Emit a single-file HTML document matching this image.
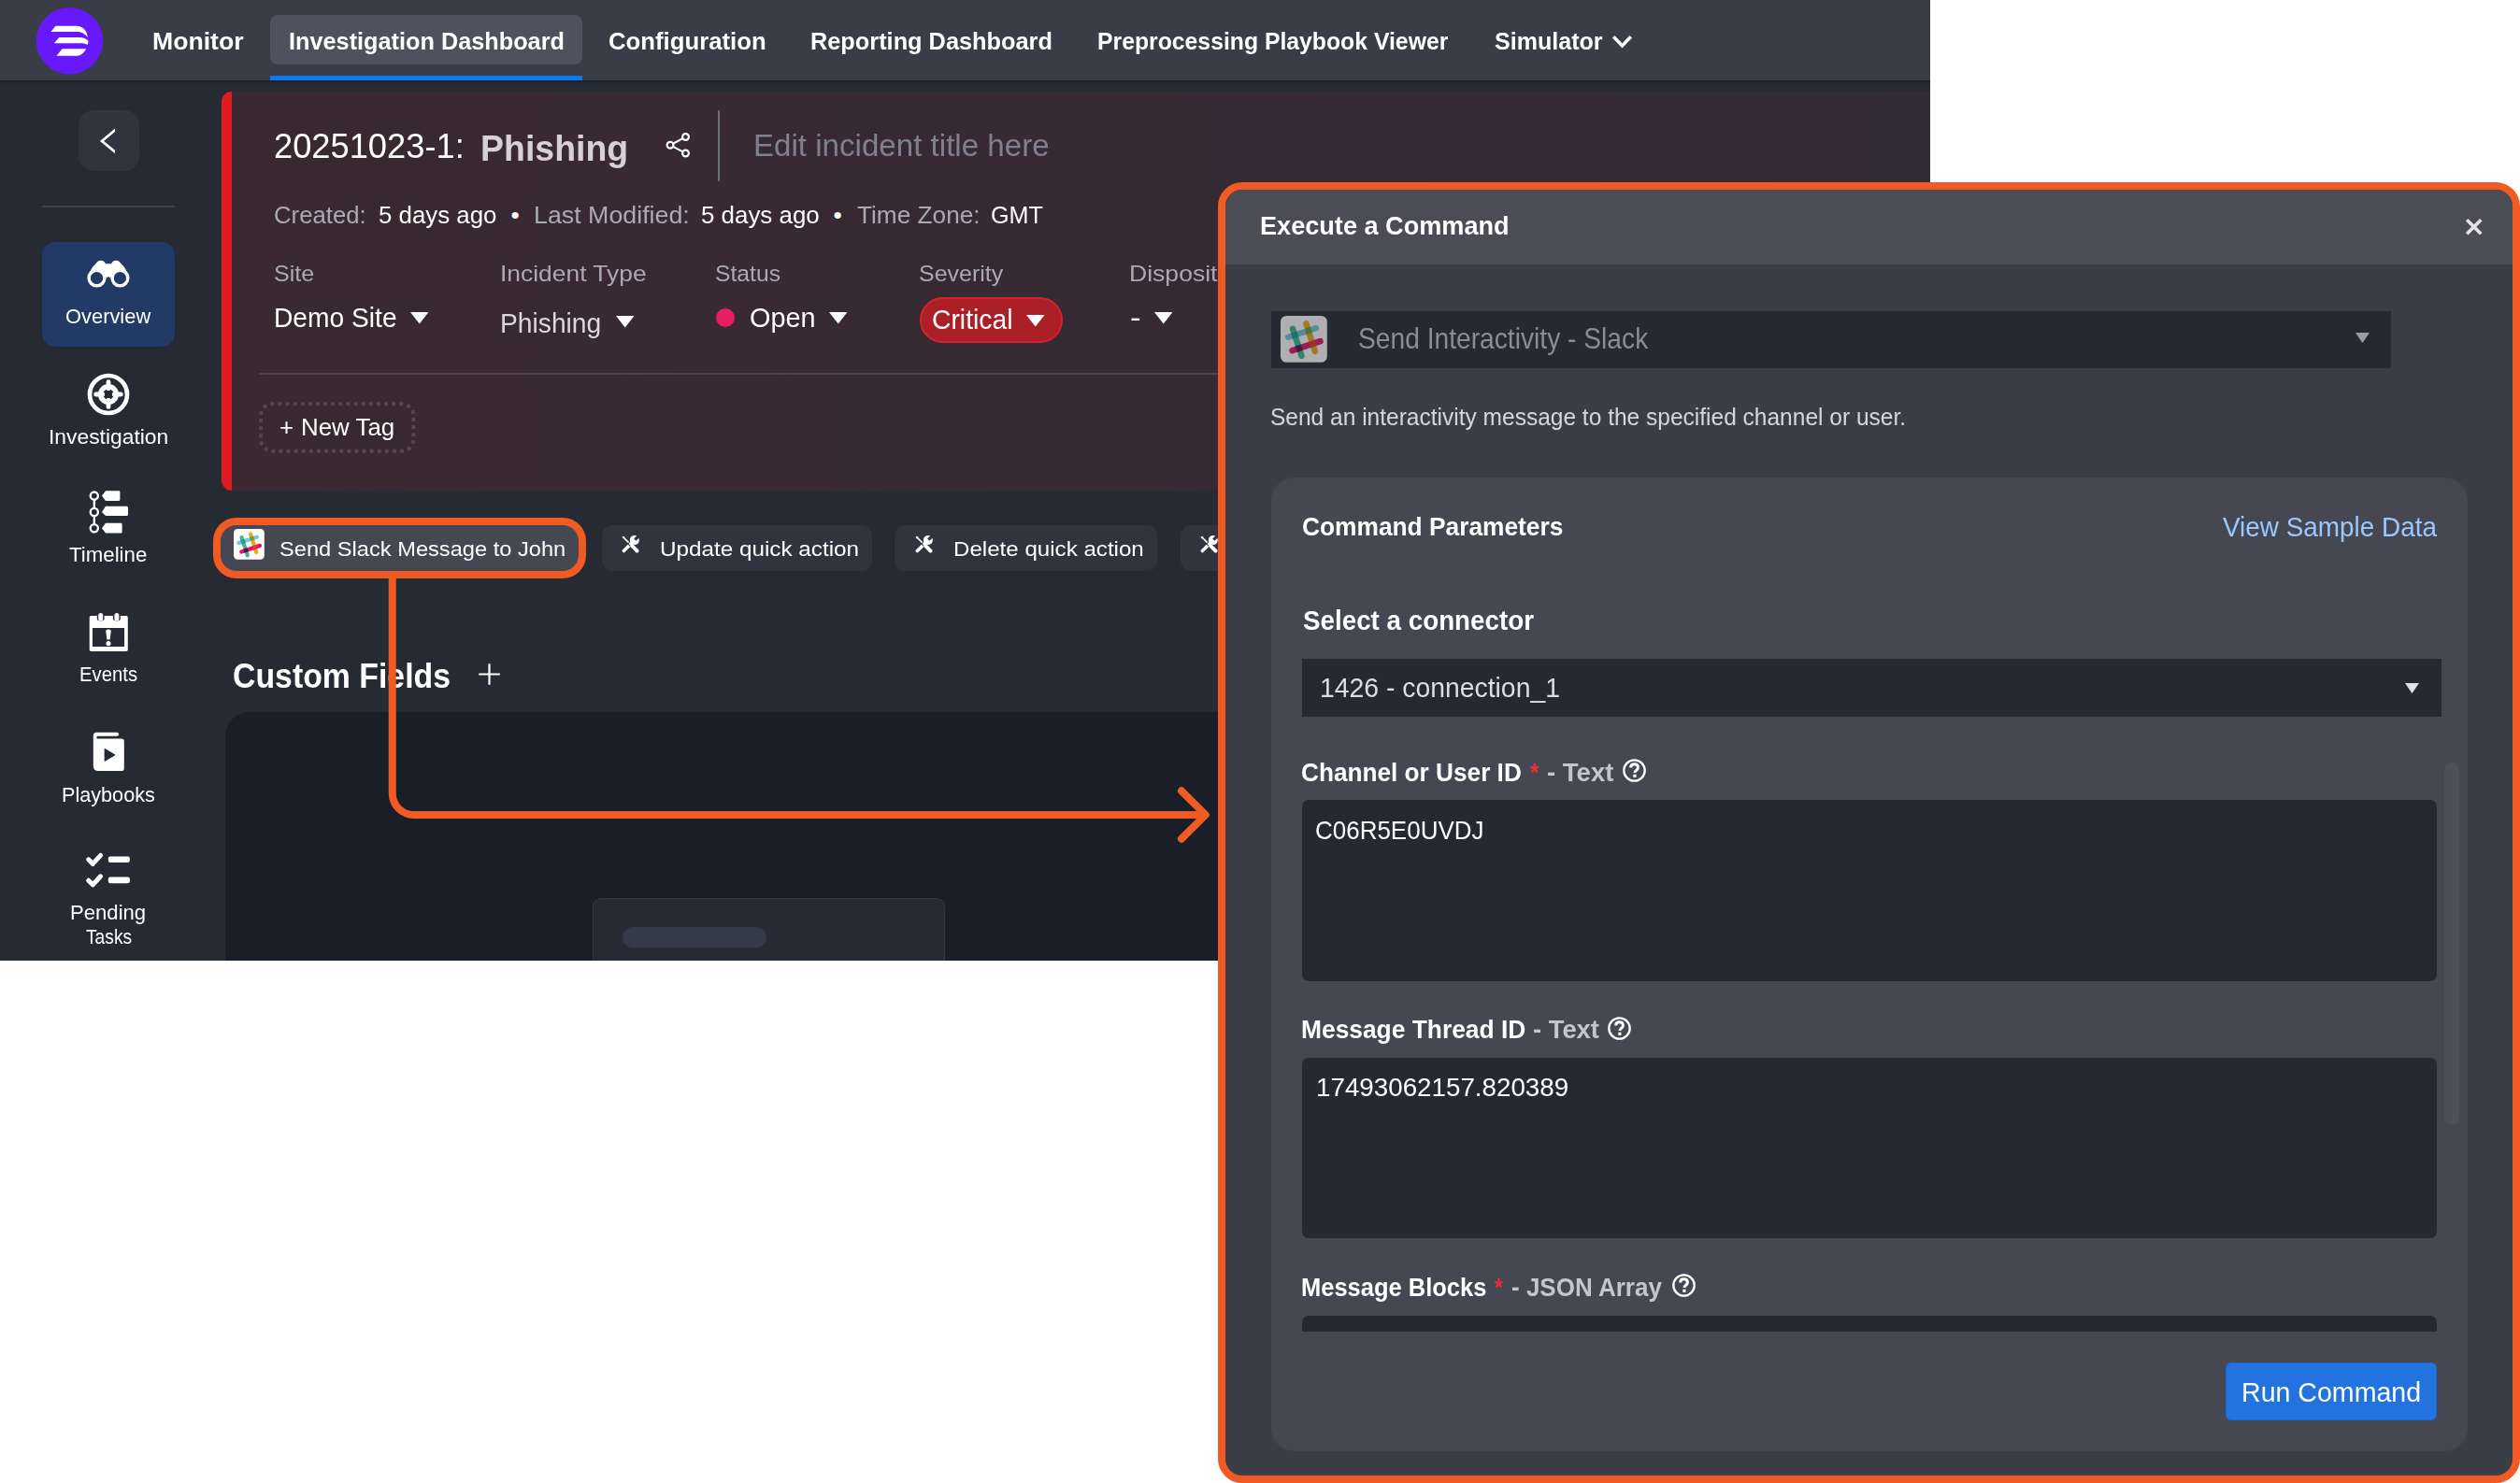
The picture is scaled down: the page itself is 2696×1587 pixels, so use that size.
<!DOCTYPE html>
<html lang="en"><head><meta charset="utf-8"><title>Execute a Command - Investigation Dashboard</title>
<style>
html,body{margin:0;padding:0}
body{width:2696px;height:1587px;position:relative;overflow:hidden;background:#fff;font-family:"Liberation Sans", Arial, sans-serif;}
div,span,svg{position:absolute;box-sizing:border-box}
span{white-space:nowrap;line-height:normal;transform-origin:0 0;display:block}
</style></head>
<body>
<div id="shot" style="left:0;top:0;width:2065px;height:1027.5px;background:#262a33;overflow:hidden">
<header><nav aria-label="Main">
<div style="left:0px;top:0px;width:2065px;height:85.5px;background:#393d47;box-shadow:0 1px 3px rgba(0,0,0,.35)"></div>
<svg style="left:38px;top:7px;" width="74" height="74" viewBox="0 0 74 74"><circle cx="36.4" cy="36.7" r="35.7" fill="#6818fd"/>
<path fill="#fff" d="M21.5 20.8 H44 C50.5 20.8 55.2 26 55.9 33.2 C52.5 28.6 48.5 27 44 27 H16.4 Z"/>
<path fill="#fff" d="M25.3 33 H47 C52 33 55.6 35.2 56.6 37.6 L55.8 41 C53.8 39.8 51.5 39.3 48.5 39.3 H19.9 Z"/>
<path fill="#fff" d="M28.5 45.2 H54.2 C52 49.5 48.3 52.8 43.5 52.8 H22.5 Z"/></svg>
<div style="left:289px;top:16px;width:334px;height:52.5px;background:#4d525e;border-radius:8px"></div>
<div style="left:289px;top:81.3px;width:334px;height:4.4px;background:#0d78f2"></div>
<span id="t0" style="left:162.69px;top:30.00px;font-size:25.2px;font-weight:700;color:#fff;transform:scaleX(1.0571);">Monitor</span>
<span id="t1" style="left:309.00px;top:30.00px;font-size:25.2px;font-weight:700;color:#fff;transform:scaleX(1.0034);">Investigation Dashboard</span>
<span id="t2" style="left:650.98px;top:30.00px;font-size:25.2px;font-weight:700;color:#fff;transform:scaleX(1.0218);">Configuration</span>
<span id="t3" style="left:866.99px;top:30.00px;font-size:25.2px;font-weight:700;color:#fff;transform:scaleX(1.0055);">Reporting Dashboard</span>
<span id="t4" style="left:1174.02px;top:30.00px;font-size:25.2px;font-weight:700;color:#fff;transform:scaleX(0.9832);">Preprocessing Playbook Viewer</span>
<span id="t5" style="left:1599.25px;top:30.00px;font-size:25.2px;font-weight:700;color:#fff;transform:scaleX(0.9948);">Simulator</span>
<svg style="left:1722px;top:34px;" width="30" height="22" viewBox="0 0 30 22"><path d="M4.200 5.200 L13.500 14.900 L22.800 5.200" fill="none" stroke="#fff" stroke-width="3.500"/></svg>
</nav></header>
<aside aria-label="Incident sections">
<div style="left:84px;top:118px;width:65px;height:65px;background:#30343e;border-radius:16px"></div>
<svg style="left:100px;top:132px;" width="23.3" height="38" viewBox="0 0 23.3 38"><path d="M25 5.700 L9 19 L25 32.100" fill="none" stroke="#fff" stroke-width="2.700" stroke-linejoin="miter"/></svg>
<div style="left:45px;top:220px;width:142px;height:1.5px;background:#3d414c"></div>
<div style="left:45px;top:259px;width:142px;height:111.5px;background:#213a66;border-radius:14px"></div>
<svg style="left:92px;top:277px;" width="48" height="32" viewBox="0 0 48 32"><path fill="#fff" d="M16 1.7 C13 1.7 11.5 3.5 9.5 6.2 C6 9 3.5 15 1.8 20.5 C3 15 20 12 22 21 C22.3 18.5 25.7 18.5 26 21 C28 12 45 15 46.2 20.5 C44.500 15 42 9 38.500 6.200 C36.500 3.500 35 1.700 32 1.700 C29.500 1.700 28 3.300 26.800 5.200 H21.200 C20 3.300 18.500 1.700 16 1.700 Z"/>
<circle cx="11.5" cy="20.5" r="8.3" fill="none" stroke="#fff" stroke-width="3.6"/>
<circle cx="36.4" cy="20.5" r="8.3" fill="none" stroke="#fff" stroke-width="3.6"/>
<circle cx="11.5" cy="20.5" r="6.500" fill="#213a66"/><circle cx="36.4" cy="20.5" r="6.500" fill="#213a66"/></svg>
<span id="t6" style="left:69.79px;top:326.00px;font-size:21.6px;font-weight:400;color:#fff;transform:scaleX(1.0135);">Overview</span>
<svg style="left:92px;top:397.6px;" width="48" height="48" viewBox="0 0 48 48"><circle cx="24" cy="24" r="20" fill="none" stroke="#fff" stroke-width="4.7"/>
<circle cx="24" cy="24" r="8.4" fill="none" stroke="#fff" stroke-width="5.4"/>
<path d="M24 10.6 V15 M24 33 V37.4 M10.6 24 H15 M33 24 H37.4" stroke="#fff" stroke-width="4.8" stroke-linecap="round"/>
<path d="M24 17 V20 M24 28 V31 M17 24 H20 M28 24 H31" stroke="#fff" stroke-width="3.400"/></svg>
<span id="t7" style="left:51.53px;top:455.00px;font-size:21.6px;font-weight:400;color:#fff;transform:scaleX(1.0576);">Investigation</span>
<svg style="left:94px;top:523px;" width="46" height="50" viewBox="0 0 46 50"><g fill="none" stroke="#fff" stroke-width="2.3"><circle cx="6.8" cy="7.6" r="4.1"/><circle cx="6.8" cy="25" r="4.1"/><circle cx="6.8" cy="42.2" r="4.1"/><path d="M6.8 11.7 V20.9 M6.8 29.1 V38.1"/></g>
<g fill="#fff"><path d="M15 7.6 L19 2.2 H33 Q34.4 2.2 34.4 3.600 V11.6 Q34.4 13 33 13 H19 Z"/><path d="M15 25 L19 18.7 H41.500 Q43 18.700 43 20.200 V27.5 Q43 29 41.500 29 H19 Z"/><path d="M15 42.200 L19 36.800 H35.200 Q36.600 36.800 36.600 38.200 V46.2 Q36.600 47.600 35.200 47.600 H19 Z"/></g></svg>
<span id="t8" style="left:74.00px;top:581.00px;font-size:21.6px;font-weight:400;color:#fff;transform:scaleX(1.0311);">Timeline</span>
<svg style="left:94px;top:654px;" width="46" height="46" viewBox="0 0 46 46"><path fill="#fff" fill-rule="evenodd" d="M3.5 5 H9.800 V8.300 Q9.800 10.400 13.700 10.400 Q17.600 10.400 17.600 8.300 V5 H27 V8.300 Q27 10.400 30.900 10.400 Q34.800 10.400 34.800 8.300 V5 H41 Q42.800 5 42.800 6.800 V41.200 Q42.800 43 41 43 H3.500 Q1.700 43 1.700 41.200 V6.800 Q1.700 5 3.500 5 Z M5 18 V38 H39 V18 Z"/>
<rect x="11.2" y="1.9" width="5" height="8.5" rx="2.5" fill="#fff"/><rect x="28.4" y="1.9" width="5" height="8.5" rx="2.5" fill="#fff"/>
<path fill="#fff" d="M19.200 21.500 Q19.200 19.500 22 19.500 Q24.800 19.500 24.800 21.500 L23.600 30.500 H20.400 Z"/><circle cx="22" cy="34.600" r="2.6" fill="#fff"/></svg>
<span id="t9" style="left:84.86px;top:709.00px;font-size:21.6px;font-weight:400;color:#fff;transform:scaleX(0.9399);">Events</span>
<svg style="left:98px;top:782px;" width="38" height="46" viewBox="0 0 38 46"><path fill="#fff" d="M5.300 1.800 H27 Q29.100 1.800 29.100 3.800 Q29.100 5.800 27 5.800 H7.300 Q5.300 5.800 5.300 7.200 Q5.300 8.600 7.300 8.600 H32 Q34.800 8.600 34.800 11.400 V40.300 Q34.800 43.100 32 43.100 H7.300 Q1.800 43.100 1.800 37.600 V5.300 Q1.800 1.800 5.300 1.800 Z"/>
<path fill="#262a33" d="M13.600 19.800 Q13.600 18.600 14.700 19.200 L24.800 25.300 Q25.700 25.900 24.800 26.500 L14.700 32.600 Q13.600 33.200 13.600 32 Z"/></svg>
<span id="t10" style="left:65.80px;top:838.25px;font-size:21.6px;font-weight:400;color:#fff;transform:scaleX(1.0017);">Playbooks</span>
<svg style="left:90px;top:910px;" width="52" height="42" viewBox="0 0 52 42"><g fill="none" stroke="#fff" stroke-width="5" stroke-linecap="round" stroke-linejoin="round"><path d="M4.700 9.800 L9.300 14.400 L17.600 5.400"/><path d="M4.700 32.200 L9.300 36.800 L17.600 27.800"/></g>
<rect x="25.800" y="6.400" width="23.100" height="6.600" rx="2.200" fill="#fff"/><rect x="25.800" y="28.600" width="23.100" height="6.600" rx="2.200" fill="#fff"/></svg>
<span id="t11" style="left:75.38px;top:964.00px;font-size:21.6px;font-weight:400;color:#fff;transform:scaleX(1.0241);">Pending</span>
<span id="t12" style="left:91.70px;top:990.00px;font-size:21.6px;font-weight:400;color:#fff;transform:scaleX(0.8899);">Tasks</span>
</aside>
<main>
<div style="left:237px;top:98px;width:1840px;height:427px;background:linear-gradient(90deg,#3b2831 0%,#352a33 60%,#322c35 100%);border-left:11.5px solid #e31b23;border-radius:11px 0 0 11px"></div>
<span id="t13" style="left:293.01px;top:135.60px;font-size:36.5px;font-weight:400;color:#fff;transform:scaleX(0.9938);">20251023-1:</span>
<span id="t14" style="left:514.40px;top:136.00px;font-size:39.5px;font-weight:700;color:#d6d1d5;transform:scaleX(0.9487);">Phishing</span>
<svg style="left:710px;top:140px;" width="30" height="30" viewBox="0 0 30 30"><g fill="none" stroke="#fff" stroke-width="2.2"><circle cx="23.500" cy="6.500" r="3.400"/><circle cx="7" cy="15.300" r="3.400"/><circle cx="23.500" cy="24" r="3.400"/><path d="M10 13.700 L20.500 8.100 M10 16.900 L20.500 22.400"/></g></svg>
<div style="left:768px;top:118px;width:2px;height:76px;background:#6c6d79"></div>
<span id="t15" style="left:806.02px;top:137.00px;font-size:33.5px;font-weight:400;color:#7e8190;transform:scaleX(0.9885);">Edit incident title here</span>
<span id="t16" style="left:293.03px;top:214.80px;font-size:26.5px;font-weight:400;color:#a9aab4;transform:scaleX(0.9707);">Created:</span>
<span id="t17" style="left:404.92px;top:214.80px;font-size:26.5px;font-weight:400;color:#fff;transform:scaleX(0.9756);">5 days ago</span>
<span id="t18" style="left:546.50px;top:214.80px;font-size:26.5px;font-weight:400;color:#fff;">•</span>
<span id="t19" style="left:570.58px;top:214.80px;font-size:26.5px;font-weight:400;color:#a9aab4;transform:scaleX(1.0111);">Last Modified:</span>
<span id="t20" style="left:750.27px;top:214.80px;font-size:26.5px;font-weight:400;color:#fff;transform:scaleX(0.9772);">5 days ago</span>
<span id="t21" style="left:891.50px;top:214.80px;font-size:26.5px;font-weight:400;color:#fff;">•</span>
<span id="t22" style="left:917.00px;top:214.80px;font-size:26.5px;font-weight:400;color:#a9aab4;transform:scaleX(0.9891);">Time Zone:</span>
<span id="t23" style="left:1059.80px;top:214.80px;font-size:26.5px;font-weight:400;color:#fff;transform:scaleX(0.9491);">GMT</span>
<span id="t24" style="left:292.98px;top:278.75px;font-size:24.5px;font-weight:400;color:#a9aab4;transform:scaleX(1.0224);">Site</span>
<span id="t25" style="left:534.84px;top:278.75px;font-size:24.5px;font-weight:400;color:#a9aab4;transform:scaleX(1.0779);">Incident Type</span>
<span id="t26" style="left:765.24px;top:278.75px;font-size:24.5px;font-weight:400;color:#a9aab4;transform:scaleX(1.0080);">Status</span>
<span id="t27" style="left:983.23px;top:278.75px;font-size:24.5px;font-weight:400;color:#a9aab4;transform:scaleX(1.0198);">Severity</span>
<span id="t28" style="left:1207.83px;top:278.75px;font-size:24.5px;font-weight:400;color:#a9aab4;transform:scaleX(1.0840);">Disposition</span>
<span id="t29" style="left:292.59px;top:323.00px;font-size:29.5px;font-weight:400;color:#fff;transform:scaleX(0.9552);">Demo Site</span>
<svg style="left:438.75px;top:333.75px;" width="20" height="13" viewBox="0 0 20 13"><path d="M0 0 H19.500 L9.750 12.500 Z" fill="#fff"/></svg>
<span id="t30" style="left:535.09px;top:328.50px;font-size:29.5px;font-weight:400;color:#dcd8dc;transform:scaleX(0.9567);">Phishing</span>
<svg style="left:658.75px;top:337.5px;" width="20" height="13" viewBox="0 0 20 13"><path d="M0 0 H19.500 L9.750 12.500 Z" fill="#fff"/></svg>
<div style="left:766.25px;top:330px;width:20px;height:20px;background:#e91e63;border-radius:50%"></div>
<span id="t31" style="left:801.52px;top:323.00px;font-size:29.5px;font-weight:400;color:#fff;transform:scaleX(0.9784);">Open</span>
<svg style="left:887px;top:334px;" width="20" height="13" viewBox="0 0 20 13"><path d="M0 0 H19.500 L9.750 12.500 Z" fill="#fff"/></svg>
<div style="left:984.25px;top:318px;width:153.2px;height:49px;background:#ab1f27;border:2.5px solid #d9222b;border-radius:25px"></div>
<span id="t32" style="left:997.04px;top:324.50px;font-size:29.5px;font-weight:400;color:#fff;transform:scaleX(0.9590);">Critical</span>
<svg style="left:1098.25px;top:336.5px;" width="20" height="13" viewBox="0 0 20 13"><path d="M0 0 H19.500 L9.750 12.500 Z" fill="#fff"/></svg>
<span id="t33" style="left:1209.31px;top:323.00px;font-size:29.5px;font-weight:400;color:#fff;transform:scaleX(1.1875);">-</span>
<svg style="left:1235px;top:334px;" width="20" height="13" viewBox="0 0 20 13"><path d="M0 0 H19.500 L9.750 12.500 Z" fill="#fff"/></svg>
<div style="left:277px;top:399px;width:1800px;height:2px;background:#524249"></div>
<svg style="left:275px;top:428px;" width="172" height="60" viewBox="0 0 172 60"><rect x="4" y="4.200" width="163.300" height="50.600" rx="12.500" fill="none" stroke="#54454e" stroke-width="3.900" stroke-dasharray="3.900 4.210" stroke-dashoffset="-6"/></svg>
<span id="t34" style="left:298.69px;top:443.30px;font-size:25.5px;font-weight:400;color:#fff;transform:scaleX(1.0077);">+</span>
<span id="t35" style="left:322.17px;top:443.30px;font-size:25.5px;font-weight:400;color:#fff;transform:scaleX(1.0143);">New Tag</span>
<div style="left:228px;top:554px;width:398.7px;height:65px;background:#454852;border:8px solid #f15a22;border-radius:25px"></div>
<svg style="left:250.4px;top:565.9px;opacity:1" width="32.8" height="32.8" viewBox="0 0 33 33"><rect width="33" height="33" rx="4.200" fill="#fffdfc"/><g opacity="1"><g stroke-width="4.3" stroke-linecap="round"><path d="M5.50 15.10 L25.00 8.80" stroke="#70cadb"/><path d="M8.60 9.10 L14.90 28.40" stroke="#3eb890"/><path d="M18.20 5.60 L24.40 25.10" stroke="#e9a820"/><path d="M8.30 24.60 L28.20 18.00" stroke="#e01765"/></g><rect x="-2.15" y="-2.15" width="4.3" height="4.3" fill="#1d9c8a" transform="translate(10.08,13.62) rotate(-17.9)"/><rect x="-2.15" y="-2.15" width="4.3" height="4.3" fill="#65a046" transform="translate(19.76,10.49) rotate(-17.9)"/><rect x="-2.15" y="-2.15" width="4.3" height="4.3" fill="#e23b30" transform="translate(22.72,19.82) rotate(-17.9)"/><rect x="-2.15" y="-2.15" width="4.3" height="4.3" fill="#4a1850" transform="translate(13.14,23.00) rotate(-17.9)"/></g></svg>
<span id="t36" style="left:298.96px;top:574.30px;font-size:22.8px;font-weight:400;color:#fff;transform:scaleX(1.0372);">Send Slack Message to John</span>
<div style="left:643.75px;top:562px;width:289.25px;height:49px;background:#30343e;border-radius:11px"></div>
<svg style="left:664.8px;top:573.2px;" width="19" height="19" viewBox="0 0 19 19"><mask id="tm1"><rect width="19" height="19" fill="#000"/><path d="M2.400 16.600 L12 7" stroke="#fff" stroke-width="3.500" stroke-linecap="round"/><circle cx="13.800" cy="5.100" r="5" fill="#fff"/><path d="M14.300 4.600 L20 -1.100" stroke="#000" stroke-width="3.300"/><path d="M6.300 8.300 L9.300 11.300" stroke="#000" stroke-width="1.100"/></mask><rect width="19" height="19" fill="#fff" mask="url(#tm1)"/><g stroke="#fff" fill="none"><path d="M1.500 1.500 L7.600 7.600" stroke-width="1.700"/><path d="M0.700 1.900 L1.900 0.700 L3.700 2 L2 3.700 Z" fill="#fff" stroke="none"/><path d="M11.700 11.700 L16.500 16.500" stroke-width="3.900" stroke-linecap="round"/><path d="M10.200 10.200 L12 12" stroke-width="2.200"/></g></svg>
<span id="t37" style="left:706.44px;top:574.30px;font-size:22.8px;font-weight:400;color:#fff;transform:scaleX(1.0640);">Update quick action</span>
<div style="left:957px;top:562px;width:281px;height:49px;background:#30343e;border-radius:11px"></div>
<svg style="left:978.5px;top:573.2px;" width="19" height="19" viewBox="0 0 19 19"><mask id="tm2"><rect width="19" height="19" fill="#000"/><path d="M2.400 16.600 L12 7" stroke="#fff" stroke-width="3.500" stroke-linecap="round"/><circle cx="13.800" cy="5.100" r="5" fill="#fff"/><path d="M14.300 4.600 L20 -1.100" stroke="#000" stroke-width="3.300"/><path d="M6.300 8.300 L9.300 11.300" stroke="#000" stroke-width="1.100"/></mask><rect width="19" height="19" fill="#fff" mask="url(#tm2)"/><g stroke="#fff" fill="none"><path d="M1.500 1.500 L7.600 7.600" stroke-width="1.700"/><path d="M0.700 1.900 L1.900 0.700 L3.700 2 L2 3.700 Z" fill="#fff" stroke="none"/><path d="M11.700 11.700 L16.500 16.500" stroke-width="3.900" stroke-linecap="round"/><path d="M10.200 10.200 L12 12" stroke-width="2.200"/></g></svg>
<span id="t38" style="left:1019.94px;top:574.30px;font-size:22.8px;font-weight:400;color:#fff;transform:scaleX(1.0579);">Delete quick action</span>
<div style="left:1263px;top:562px;width:300px;height:49px;background:#30343e;border-radius:11px"></div>
<svg style="left:1283.6px;top:573.2px;" width="19" height="19" viewBox="0 0 19 19"><mask id="tm3"><rect width="19" height="19" fill="#000"/><path d="M2.400 16.600 L12 7" stroke="#fff" stroke-width="3.500" stroke-linecap="round"/><circle cx="13.800" cy="5.100" r="5" fill="#fff"/><path d="M14.300 4.600 L20 -1.100" stroke="#000" stroke-width="3.300"/><path d="M6.300 8.300 L9.300 11.300" stroke="#000" stroke-width="1.100"/></mask><rect width="19" height="19" fill="#fff" mask="url(#tm3)"/><g stroke="#fff" fill="none"><path d="M1.500 1.500 L7.600 7.600" stroke-width="1.700"/><path d="M0.700 1.900 L1.900 0.700 L3.700 2 L2 3.700 Z" fill="#fff" stroke="none"/><path d="M11.700 11.700 L16.500 16.500" stroke-width="3.900" stroke-linecap="round"/><path d="M10.200 10.200 L12 12" stroke-width="2.200"/></g></svg>
<span id="t39" style="left:1326.50px;top:574.30px;font-size:22.8px;font-weight:400;color:#fff;">Create quick action</span>
<span id="t40" style="left:249.08px;top:703.00px;font-size:36.8px;font-weight:700;color:#fff;transform:scaleX(0.9193);">Custom Fields</span>
<svg style="left:511.2px;top:708.9px;" width="25" height="25" viewBox="0 0 25 25"><path d="M12.500 1.200 V23.800 M1.200 12.500 H23.800" stroke="#fff" stroke-width="2.200"/></svg>
<div style="left:241px;top:762px;width:1900px;height:400px;background:#1a1e29;border-radius:26px 0 0 0"></div>
<div style="left:633.75px;top:961px;width:377.5px;height:120px;background:#252a35;border:1.5px solid #313640;border-radius:9px"></div>
<div style="left:665.75px;top:991.75px;width:154.5px;height:22.5px;background:#333a49;border-radius:12px"></div>
</main>
</div>
<svg style="left:400px;top:600px;" width="910" height="320" viewBox="0 0 910 320"><g fill="none" stroke="#f15a22" stroke-width="8">
<path d="M19.750 16 V249 A23 23 0 0 0 42.750 272 H889"/>
<path d="M864 246.300 L889.750 272 L864 297.700" stroke-linecap="round" stroke-linejoin="round"/></g></svg>
<div id="modal" role="dialog" aria-label="Execute a Command" style="left:1303px;top:195px;width:1392.75px;height:1392.25px;border:8px solid #f15a22;border-radius:26px;background:#3b3e47;overflow:hidden">
<div style="left:0px;top:0px;width:1380px;height:79.5px;background:#4b4c56"></div>
<span id="t41" style="left:37.29px;top:22.25px;font-size:28.2px;font-weight:700;color:#fff;transform:scaleX(0.9617);">Execute a Command</span>
<svg style="left:1325px;top:29px;" width="22" height="22" viewBox="0 0 22 22"><path d="M3.200 3.200 L18.300 18.300 M18.300 3.200 L3.200 18.300" stroke="#e3e3e7" stroke-width="3.600"/></svg>
<div style="left:49px;top:129.5px;width:1197.75px;height:61.5px;background:#262932"></div>
<svg style="left:59.3px;top:135.3px;opacity:0.63" width="49.8" height="49.8" viewBox="0 0 33 33"><rect width="33" height="33" rx="4.200" fill="#fffdfc"/><g opacity="1"><g stroke-width="4.3" stroke-linecap="round"><path d="M5.50 15.10 L25.00 8.80" stroke="#70cadb"/><path d="M8.60 9.10 L14.90 28.40" stroke="#3eb890"/><path d="M18.20 5.60 L24.40 25.10" stroke="#e9a820"/><path d="M8.30 24.60 L28.20 18.00" stroke="#e01765"/></g><rect x="-2.15" y="-2.15" width="4.3" height="4.3" fill="#1d9c8a" transform="translate(10.08,13.62) rotate(-17.9)"/><rect x="-2.15" y="-2.15" width="4.3" height="4.3" fill="#65a046" transform="translate(19.76,10.49) rotate(-17.9)"/><rect x="-2.15" y="-2.15" width="4.3" height="4.3" fill="#e23b30" transform="translate(22.72,19.82) rotate(-17.9)"/><rect x="-2.15" y="-2.15" width="4.3" height="4.3" fill="#4a1850" transform="translate(13.14,23.00) rotate(-17.9)"/></g></svg>
<span id="t42" style="left:141.83px;top:142.20px;font-size:30.5px;font-weight:400;color:#8b8c94;transform:scaleX(0.9243);">Send Interactivity - Slack</span>
<svg style="left:1208.5px;top:152.5px;" width="15" height="11" viewBox="0 0 15 11"><path d="M0 0 H15 L7.500 11 Z" fill="#9b9ca4"/></svg>
<span id="t43" style="left:48.07px;top:227.50px;font-size:26.3px;font-weight:400;color:#d6d7dc;transform:scaleX(0.9323);">Send an interactivity message to the specified channel or user.</span>
<div style="left:49px;top:308px;width:1279.5px;height:1041.5px;background:#454852;border-radius:25px"></div>
<span id="t44" style="left:81.77px;top:346.25px;font-size:26.8px;font-weight:700;color:#fff;transform:scaleX(0.9821);">Command Parameters</span>
<span id="t45" style="left:1067.00px;top:344.75px;font-size:28.6px;font-weight:400;color:#9dc6fb;transform:scaleX(0.9753);">View Sample Data</span>
<span id="t46" style="left:82.75px;top:443.75px;font-size:29.5px;font-weight:700;color:#fff;transform:scaleX(0.9417);">Select a connector</span>
<div style="left:82px;top:501.5px;width:1218.5px;height:62.5px;background:#262932"></div>
<span id="t47" style="left:100.81px;top:515.75px;font-size:29.3px;font-weight:400;color:#dddee3;transform:scaleX(0.9677);">1426 - connection_1</span>
<svg style="left:1262.25px;top:528.25px;" width="15" height="11" viewBox="0 0 15 11"><path d="M0 0 H15 L7.500 11 Z" fill="#e2e2e5"/></svg>
<div style="left:1304.3px;top:612.7px;width:16px;height:388.3px;background:#4d4f59;border-radius:8px"></div>
<span id="t48" style="left:81.02px;top:608.70px;font-size:26.8px;font-weight:700;color:#fff;transform:scaleX(0.9776);">Channel or User ID</span>
<span id="t49" style="left:326.00px;top:608.70px;font-size:26.8px;font-weight:700;color:#ee2b37;transform:scaleX(0.9091);">*</span>
<span id="t50" style="left:343.72px;top:608.70px;font-size:26.8px;font-weight:700;color:#c5c6cd;transform:scaleX(1.0284);">- Text</span>
<svg style="left:424.5px;top:609px;" width="25" height="25" viewBox="0 0 25 25"><circle cx="12.500" cy="12.500" r="11.200" fill="none" stroke="#fff" stroke-width="2.300"/>
<path d="M8.700 9.400 Q8.700 5.800 12.500 5.800 Q16.400 5.800 16.400 9.200 Q16.400 11.200 14.400 12.400 Q13 13.300 13 15" fill="none" stroke="#fff" stroke-width="3"/><rect x="11.300" y="16.700" width="3.200" height="3.200" fill="#fff"/></svg>
<div style="left:82px;top:653.25px;width:1214px;height:193.25px;background:#262932;border-radius:7px"></div>
<span id="t51" style="left:95.58px;top:668.50px;font-size:28.3px;font-weight:400;color:#fff;transform:scaleX(0.9180);">C06R5E0UVDJ</span>
<span id="t52" style="left:81.02px;top:884.25px;font-size:26.8px;font-weight:700;color:#fff;transform:scaleX(0.9840);">Message Thread ID</span>
<span id="t53" style="left:328.98px;top:884.25px;font-size:26.8px;font-weight:700;color:#c5c6cd;transform:scaleX(1.0211);">- Text</span>
<svg style="left:409.25px;top:884.55px;" width="25" height="25" viewBox="0 0 25 25"><circle cx="12.500" cy="12.500" r="11.200" fill="none" stroke="#fff" stroke-width="2.300"/>
<path d="M8.700 9.400 Q8.700 5.800 12.500 5.800 Q16.400 5.800 16.400 9.200 Q16.400 11.200 14.400 12.400 Q13 13.300 13 15" fill="none" stroke="#fff" stroke-width="3"/><rect x="11.300" y="16.700" width="3.200" height="3.200" fill="#fff"/></svg>
<div style="left:82px;top:929px;width:1214px;height:193px;background:#262932;border-radius:7px"></div>
<span id="t54" style="left:96.54px;top:943.50px;font-size:28.3px;font-weight:400;color:#fff;transform:scaleX(0.9811);">17493062157.820389</span>
<span id="t55" style="left:81.05px;top:1160.00px;font-size:26.8px;font-weight:700;color:#fff;transform:scaleX(0.9510);">Message Blocks</span>
<span id="t56" style="left:287.75px;top:1160.00px;font-size:26.8px;font-weight:700;color:#ee2b37;transform:scaleX(0.8409);">*</span>
<span id="t57" style="left:306.03px;top:1160.00px;font-size:26.8px;font-weight:700;color:#c5c6cd;transform:scaleX(0.9705);">- JSON Array</span>
<svg style="left:478px;top:1160.3px;" width="25" height="25" viewBox="0 0 25 25"><circle cx="12.500" cy="12.500" r="11.200" fill="none" stroke="#fff" stroke-width="2.300"/>
<path d="M8.700 9.400 Q8.700 5.800 12.500 5.800 Q16.400 5.800 16.400 9.200 Q16.400 11.200 14.400 12.400 Q13 13.300 13 15" fill="none" stroke="#fff" stroke-width="3"/><rect x="11.300" y="16.700" width="3.200" height="3.200" fill="#fff"/></svg>
<div style="left:82px;top:1205px;width:1214px;height:17px;background:#262932;border-radius:7px 7px 0 0"></div>
<div style="left:1070px;top:1255px;width:226px;height:61.5px;background:#2272e0;border:1.5px solid #1f68cc;border-radius:6px"></div>
<span id="t58" style="left:1086.61px;top:1269.50px;font-size:30.3px;font-weight:400;color:#fff;transform:scaleX(0.9430);">Run Command</span>
</div>
</body></html>
